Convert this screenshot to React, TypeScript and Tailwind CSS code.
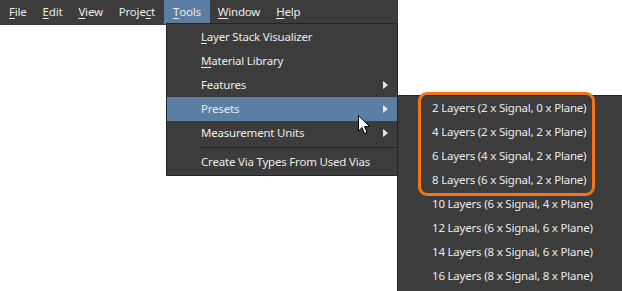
import React from "react";

const U = ({ c }: { c: string }) => <span className="underline underline-offset-2">{c}</span>;

const Arrow = () => (
  <svg width="5" height="8" viewBox="0 0 5 8" className="absolute right-[9px] top-1/2 -translate-y-1/2">
    <path d="M0 0 L5 4 L0 8 Z" fill="#e6e6e6" />
  </svg>
);

export default function App() {
  const presets = [
    "2 Layers (2 x Signal, 0 x Plane)",
    "4 Layers (2 x Signal, 2 x Plane)",
    "6 Layers (4 x Signal, 2 x Plane)",
    "8 Layers (6 x Signal, 2 x Plane)",
    "10 Layers (6 x Signal, 4 x Plane)",
    "12 Layers (6 x Signal, 6 x Plane)",
    "14 Layers (8 x Signal, 6 x Plane)",
    "16 Layers (8 x Signal, 8 x Plane)",
  ];
  return (
    <div
      className="relative w-[622px] h-[291px] bg-white overflow-hidden text-[11.5px] tracking-[-0.2px] text-[#ebebeb]"
      style={{ fontFamily: '"Noto Sans", "Open Sans", sans-serif' }}
    >
      {/* Menu bar */}
      <div className="flex h-[25px] w-[398px] bg-[#3c3c3c] items-start pl-[9px]">
        <div className="flex items-center h-[24px] mr-[16px]"><U c="F" />ile</div>
        <div className="flex items-center h-[24px] mr-[16px]"><U c="E" />dit</div>
        <div className="flex items-center h-[24px] mr-[16px]"><U c="V" />iew</div>
        <div className="flex items-center h-[24px] mr-[9px]">Proje<U c="c" />t</div>
        <div className="flex items-center h-[24px] px-[9px] bg-[#5b7ea3]"><U c="T" />ools</div>
        <div className="flex items-center h-[24px] ml-[8px] mr-[16px]"><U c="W" />indow</div>
        <div className="flex items-center h-[24px]"><U c="H" />elp</div>
      </div>

      {/* Tools dropdown */}
      <div className="absolute left-[166px] top-[23px] w-[232px] h-[153px] bg-[#3c3c3c] border border-[#252525] pt-[1px]">
        <div className="relative flex items-center h-[24px] pl-[34px]"><U c="L" />ayer Stack Visualizer</div>
        <div className="relative flex items-center h-[24px] pl-[34px]"><U c="M" />aterial Library</div>
        <div className="relative flex items-center h-[24px] pl-[34px]">Features<Arrow /></div>
        <div className="relative flex items-center h-[24px] pl-[34px] bg-[#5b7ea3]">Presets<Arrow /></div>
        <div className="relative flex items-center h-[24px] pl-[34px]">Measurement Units<Arrow /></div>
        <div className="ml-[34px] h-[1px] bg-[#242424] my-[2px]" />
        <div className="relative flex items-center h-[24px] pl-[34px]">Create Via Types From Used Vias</div>
      </div>

      {/* Presets submenu */}
      <div className="absolute left-[397px] top-[95px] w-[240px] h-[210px] bg-[#3c3c3c] border border-[#252525]">
        {presets.map((p) => (
          <div key={p} className="flex items-center h-[24px] pl-[34px]">{p}</div>
        ))}
      </div>

      {/* Orange highlight box */}
      <div className="absolute left-[418px] top-[92px] w-[177px] h-[104px] border-[3px] border-[#f57414] rounded-[9px]" />

      {/* Mouse cursor */}
      <svg className="absolute left-[358px] top-[115px]" width="13" height="20" viewBox="0 0 13 20">
        <path d="M0.5 0.5 L0.5 16 L4 12.5 L6.5 18.5 L9 17.5 L6.5 11.5 L11.5 11.5 Z" fill="#ffffff" stroke="#000000" strokeWidth="1" strokeLinejoin="round" />
      </svg>
    </div>
  );
}
